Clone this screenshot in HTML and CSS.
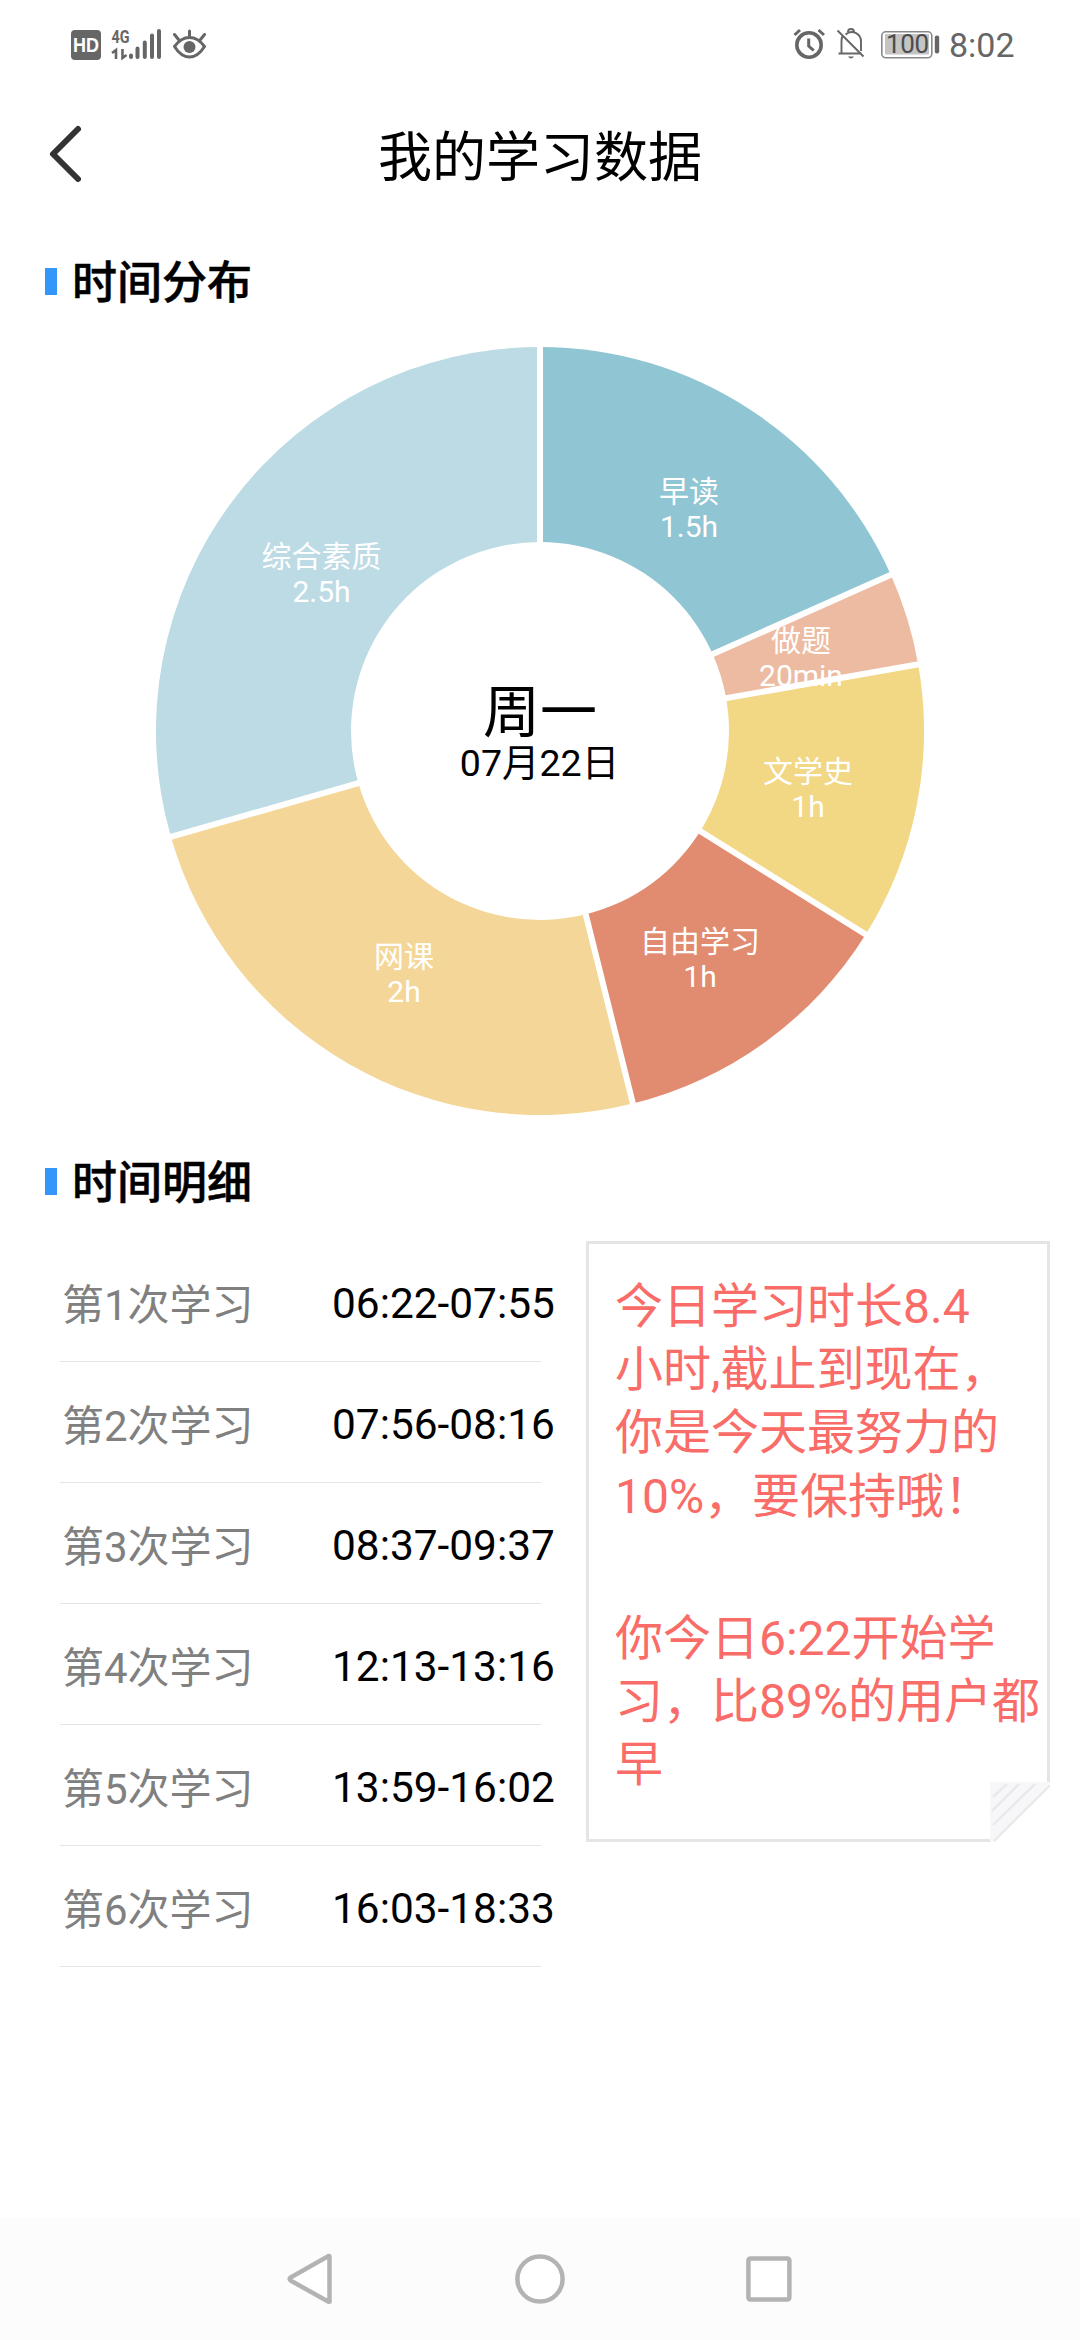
FILE: index.html
```html
<!DOCTYPE html>
<html lang="zh-CN">
<head>
<meta charset="utf-8">
<title>我的学习数据</title>
<link rel="stylesheet" href="styles.css">
</head>
<body>
<div class="statusbar">
  <div class="status-left">
    <svg class="status-icons" width="140" height="44" viewBox="66 22 140 44">
      <rect x="71" y="30" width="30" height="30" rx="4" fill="#666"/>
      <text class="hd" x="86" y="51.500" text-anchor="middle" textLength="26" lengthAdjust="spacingAndGlyphs">HD</text>
      <text class="net" x="111.500" y="42.500" textLength="18" lengthAdjust="spacingAndGlyphs">4G</text>
      <path d="M112 53l4-3v9M126.500 55l-4 3v-9" fill="none" stroke="#666" stroke-width="2.600"/>
      <path d="M131 55.500v1.500M137.500 48.500v8.500M144.800 42.500v14.500M152 35.500v21.500M159 31v26" fill="none" stroke="#666" stroke-width="4" stroke-linecap="round"/>
      <path d="M174.500 46.500q6.500-9 15-9t15 9q-6.500 10.500-15 10.500t-15-10.500zM189.500 36v-5M178.500 39.500l-4-5M200.500 39.500l4-5" fill="none" stroke="#666" stroke-width="3" stroke-linecap="round" stroke-linejoin="round"/>
      <circle cx="189.500" cy="47" r="6" fill="#666"/>
    </svg>
  </div>
  <div class="status-right">
    <svg class="status-icons" width="150" height="44" viewBox="790 22 150 44">
      <g fill="none" stroke="#666">
        <circle cx="809" cy="45" r="12.200" stroke-width="3.600"/>
        <path d="M808.700 38.500v7.500l5 4.500" stroke-width="3"/>
        <path d="M794.500 35l5.500-5M824 35l-5.500-5" stroke-width="3"/>
        <path d="M838.500 53.500h23M841.500 53v-12c0-3 .7-4.500 1.500-6M845.500 34.500c7-6 16 0 15.500 7.500v9M848 32c0-4 6-4 6 0M837.500 30.500l26 26" stroke-width="1.900"/>
        <rect x="881.800" y="31.800" width="50" height="26" rx="4" stroke="#888" stroke-width="1.600"/>
      </g>
      <path d="M848 56.500h6q-3 4-6 0z" fill="#666"/>
      <rect x="885" y="34" width="44" height="20.500" rx="1" fill="#c4c4c4"/>
      <rect x="934.800" y="35.500" width="4.400" height="18" rx="2" fill="#666"/>
      <text class="battery" x="886" y="52.500" textLength="43">100</text>
    </svg>
    <span class="clock">8:02</span>
  </div>
</div>

<header class="titlebar">
  <svg class="back" width="40" height="64" viewBox="0 0 40 64"><path d="M33 7L8 32l25 25" /></svg>
  <h1 class="title">我的学习数据</h1>
</header>

<main class="content">
  <h2 class="section"><span class="section-text">时间分布</span></h2>
  <svg class="donut" width="768" height="768" viewBox="0 0 768 768">
    <path fill="#90c5d3" d="M384 384V0A384 384 0 0 1 734.800 227.810z"/>
    <path fill="#edbba2" d="M384 384L734.800 227.810A384 384 0 0 1 762.170 317.320z"/>
    <path fill="#f2d784" d="M384 384L762.170 317.320A384 384 0 0 1 709.650 587.490z"/>
    <path fill="#e18b70" d="M384 384L709.650 587.490A384 384 0 0 1 476.900 756.590z"/>
    <path fill="#f4d798" d="M384 384L476.900 756.590A384 384 0 0 1 14.880 489.850z"/>
    <path fill="#bddbe4" d="M384 384L14.880 489.850A384 384 0 0 1 384 0z"/>
    <path class="gaps" d="M384 384V-2M384 384L736.620 227M384 384L764.140 316.980M384 384L711.350 588.550M384 384L477.380 758.530M384 384L12.960 490.400"/>
    <circle cx="384" cy="384" r="189" fill="#fff"/>
    <g class="slice-label">
      <text x="533" y="155">早读</text><text x="533" y="190">1.5h</text>
      <text x="645" y="304">做题</text><text x="645" y="339">20min</text>
      <text x="652" y="435">文学史</text><text x="652" y="470">1h</text>
      <text x="544" y="605">自由学习</text><text x="544" y="640">1h</text>
      <text x="248" y="620">网课</text><text x="248" y="655">2h</text>
      <text x="165.500" y="220">综合素质</text><text x="165.500" y="255">2.5h</text>
    </g>
    <text class="weekday" x="384" y="385">周一</text>
    <text class="date" x="383.500" y="429">07月22日</text>
  </svg>

  <h2 class="section section-detail"><span class="section-text">时间明细</span></h2>
  <div class="details">
    <ul class="sessions">
      <li class="session"><span class="name">第1次学习</span><span class="time">06:22-07:55</span></li>
      <li class="session"><span class="name">第2次学习</span><span class="time">07:56-08:16</span></li>
      <li class="session"><span class="name">第3次学习</span><span class="time">08:37-09:37</span></li>
      <li class="session"><span class="name">第4次学习</span><span class="time">12:13-13:16</span></li>
      <li class="session"><span class="name">第5次学习</span><span class="time">13:59-16:02</span></li>
      <li class="session"><span class="name">第6次学习</span><span class="time">16:03-18:33</span></li>
    </ul>
    <aside class="note">
      <p class="para">今日学习时长8.4<br>小时,截止到现在，<br>你是今天最努力的<br>10%，要保持哦！</p>
      <p class="para">你今日6:22开始学<br>习，比89%的用户都<br>早</p>
      <svg class="fold" width="60" height="60" viewBox="0 0 60 60">
        <rect width="60" height="60" fill="#fff"/>
        <path d="M0 0h60L3 60H0z" fill="#f7f7f9"/>
        <path d="M3 15L17 2M2 29L29 2M3 43L45 2M4 59L60 3" fill="none" stroke="#e9e9ea" stroke-width="2.400"/>
      </svg>
    </aside>
  </div>
</main>

<nav class="navbar">
  <svg class="nav-icon" width="54" height="54" viewBox="0 0 54 54"><path d="M45.500 4.500v45q0 .500-1.500 0L6.500 28.500q-1.500-1.500 0-3L44 4.200q1.500-.500 1.500.300z"/></svg>
  <svg class="nav-icon" width="54" height="54" viewBox="0 0 54 54"><circle cx="27" cy="27" r="22.600"/></svg>
  <svg class="nav-icon" width="54" height="54" viewBox="0 0 54 54"><rect x="6.400" y="6.400" width="41" height="41" rx="2"/></svg>
</nav>
</body>
</html>
```
FILE: styles.css
```css
* {
  box-sizing: border-box;
  margin: 0;
  padding: 0;
}

body {
  display: flex;
  flex-direction: column;
  width: 1080px;
  height: 2340px;
  background: #fff;
  color: #000;
  font-family: Roboto, "Noto Sans CJK SC", sans-serif;
  overflow: hidden;
}

.statusbar {
  display: flex;
  justify-content: space-between;
  height: 90px;
  padding: 22px 66px 0;
}

.status-icons {
  display: block;
}

.status-right {
  display: flex;
  gap: 9px;
}

.hd {
  font: bold 20px "Liberation Sans", sans-serif;
  fill: #fff;
}

.net {
  font: bold 19px Roboto, sans-serif;
  fill: #666;
}

.battery {
  font-size: 26px;
  fill: #4c4c4c;
}

.clock {
  width: 65px;
  color: #666;
  font-size: 34px;
  line-height: 46px;
  white-space: nowrap;
}

.titlebar {
  display: grid;
  grid-template-columns: 120px 1fr 120px;
  align-items: center;
  height: 128px;
}

.back {
  display: block;
  margin-left: 45px;
}

.back path {
  fill: none;
  stroke: #333;
  stroke-width: 6;
  stroke-linecap: round;
  stroke-linejoin: round;
}

.title {
  padding-top: 9px;
  font-size: 54px;
  font-weight: 400;
  line-height: 80px;
  text-align: center;
}

.content {
  flex: 1;
}

.section {
  display: flex;
  align-items: center;
  gap: 15px;
  height: 66px;
  margin-top: 30px;
  padding-left: 45px;
  font-size: 45px;
  font-weight: 500;
  line-height: 66px;
}

.section::before {
  content: "";
  width: 12px;
  height: 27px;
  background: #3396fb;
}

.section-text {
  padding-top: 6px;
  -webkit-text-stroke: 0.500px #000;
}

.section-detail {
  margin-top: 33px;
}

.donut {
  display: block;
  margin: 33px auto 0;
}

.gaps {
  fill: none;
  stroke: #fff;
  stroke-width: 6;
}

.slice-label {
  font-size: 30px;
  fill: #fff;
  text-anchor: middle;
}

.weekday {
  font-size: 57px;
  text-anchor: middle;
}

.date {
  font-size: 37.500px;
  text-anchor: middle;
}

.details {
  display: flex;
  gap: 45px;
  align-items: flex-start;
  padding: 27px 30px 0 60px;
}

.sessions {
  width: 481px;
  list-style: none;
}

.session {
  display: flex;
  align-items: center;
  height: 121px;
  border-bottom: 1px solid #e5e5e5;
  white-space: nowrap;
}

.name {
  flex: none;
  width: 272px;
  padding-left: 2px;
  color: #808080;
  font-size: 42px;
}

.time {
  padding-top: 4px;
  font-size: 42.400px;
}

.note {
  position: relative;
  width: 464px;
  height: 601px;
  padding: 31px 0 0 26px;
  border: 3px solid #e5e5e5;
  color: #f96c68;
  font-size: 48px;
  line-height: 63.200px;
  white-space: nowrap;
}

.para + .para {
  margin-top: 79px;
}

.fold {
  position: absolute;
  right: -3px;
  bottom: -3px;
}

.navbar {
  display: flex;
  justify-content: center;
  gap: 175px;
  height: 122px;
  padding-top: 34px;
  background: #fcfcfc;
}

.nav-icon {
  fill: #fff;
  stroke: #b3b3b3;
  stroke-width: 4.500;
}
```
